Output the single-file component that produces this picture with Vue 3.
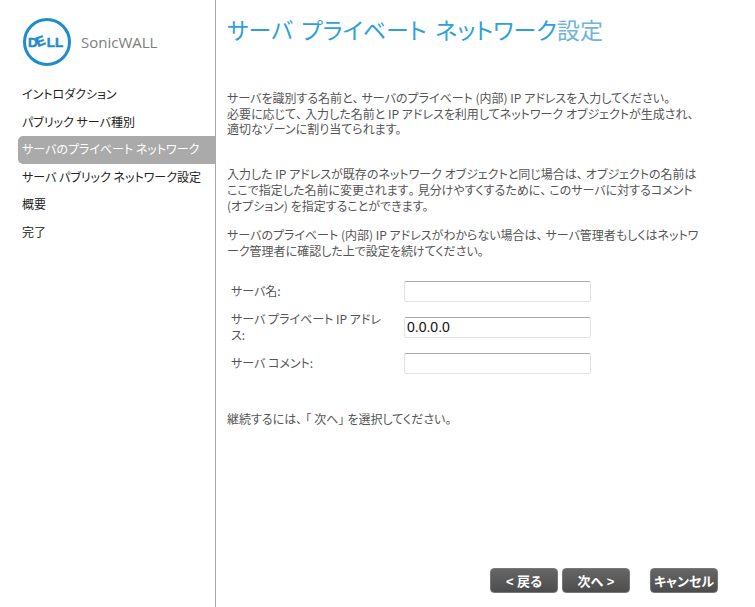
<template>
  <div class="page">
    <aside class="side">
      <div class="logo">
        <svg width="50" height="50" viewBox="0 0 50 50" class="mark">
          <circle cx="25" cy="25" r="22.5" fill="none" stroke="#1f8ccb" stroke-width="3" />
          <text x="6" y="30" rotate="0 -20 0 0" class="dell">DELL</text>
        </svg>
        <span class="brand">SonicWALL</span>
      </div>
      <nav class="nav">
        <div v-for="(item, i) in items" :key="item" class="item" :class="{ active: i === 2 }">{{ item }}</div>
      </nav>
    </aside>
    <main class="main">
      <h1 class="title">サーバ プライベート ネットワーク<span class="light">設定</span></h1>
      <p class="p p1">サーバを識別する名前と<span class="fw">、</span>サーバのプライベート (内部) IP アドレスを入力してください。<br>必要に応じて<span class="fw">、</span>入力した名前と IP アドレスを利用してネットワーク オブジェクトが生成され、<br>適切なゾーンに割り当てられます。</p>
      <p class="p p2">入力した IP アドレスが既存のネットワーク オブジェクトと同じ場合は<span class="fw">、</span>オブジェクトの名前は<br>ここで指定した名前に変更されます<span class="fw">。</span>見分けやすくするために<span class="fw">、</span>このサーバに対するコメント<br>(オプション) を指定することができます。</p>
      <p class="p p3">サーバのプライベート (内部) IP アドレスがわからない場合は<span class="fw">、</span>サーバ管理者もしくはネットワ<br>ーク管理者に確認した上で設定を続けてください。</p>
      <div class="form">
        <label class="lab">サーバ名:</label>
        <input class="inp" type="text" value="" />
        <label class="lab">サーバ プライベート IP アドレ<br>ス:</label>
        <input class="inp" type="text" value="0.0.0.0" />
        <label class="lab">サーバ コメント:</label>
        <input class="inp" type="text" value="" />
      </div>
      <p class="p p4">継続するには<span class="fw">、「</span>次へ<span class="fw">」</span>を選択してください。</p>
      <div class="btns">
        <button class="btn">&lt; 戻る</button>
        <button class="btn">次へ &gt;</button>
        <button class="btn cancel">キャンセル</button>
      </div>
    </main>
  </div>
</template>

<script setup>
const items = [
  'イントロダクション',
  'パブリック サーバ種別',
  'サーバのプライベート ネットワーク',
  'サーバ パブリック ネットワーク設定',
  '概要',
  '完了',
]
</script>

<style>
html, body { margin: 0; background: #fff; }
</style>

<style scoped>
.page {
  display: flex;
  width: 755px;
  height: 607px;
  overflow: hidden;
  font-family: "Noto Sans CJK JP", "Liberation Sans", sans-serif;
  font-size: 12px;
  font-feature-settings: "palt";
  color: #555;
}
.side {
  box-sizing: border-box;
  width: 216px;
  flex: none;
  border-right: 1px solid #aaa;
  padding: 17px 0 0 18px;
}
.logo { display: flex; align-items: center; padding-left: 4px; height: 50px; }
.mark { flex: none; }
.dell { font: 900 13.5px "Liberation Sans", sans-serif; fill: #1f8ccb; stroke: #1f8ccb; stroke-width: 0.5; }
.brand { margin-left: 9px; margin-top: -1px; font: 15px "Open Sans", sans-serif; color: #7d7d7d; }
.nav { margin-top: 14px; display: flex; flex-direction: column; }
.item {
  height: 27.6px;
  line-height: 26px;
  padding-left: 4px;
  color: #222;
  white-space: nowrap;
}
.item.active { background: #aaa; color: #fff; border-radius: 5px 0 0 5px; }
.main { position: relative; flex: 1; padding: 14px 0 0 11px; min-width: 0; }
.title { margin: 0; font-size: 23px; font-weight: 400; line-height: 30px; word-spacing: 3.5px; color: #2f9fdc; white-space: nowrap; }
.light { color: #6fb4da; }
.p { margin: 0; line-height: 15.7px; white-space: nowrap; }
.fw { letter-spacing: 3px; }
.p1 { margin-top: 46px; }
.p2 { margin-top: 29px; }
.p3 { margin-top: 14px; }
.p4 { margin-top: 37px; }
.form {
  display: grid;
  grid-template-columns: 173px 187px;
  grid-auto-rows: 21px;
  row-gap: 15px;
  margin-top: 22px;
  padding-left: 4px;
  align-items: center;
}
.lab { width: 165px; line-height: 16px; white-space: nowrap; }
.inp {
  box-sizing: border-box;
  width: 187px;
  height: 21px;
  padding: 0 2px;
  border: 1px solid #dfe3e8;
  border-top-color: #aaa;
  border-radius: 2px;
  background: #fff;
  font: 14px "Liberation Sans", sans-serif;
  color: #111;
  outline: none;
}
.btns {
  position: absolute;
  left: 274px;
  top: 568px;
  display: flex;
  gap: 4px;
}
.btn {
  box-sizing: border-box;
  width: 68px;
  height: 25px;
  padding: 0;
  border: 1px solid #777;
  border-radius: 4px;
  background: linear-gradient(#666, #4c4c4c);
  color: #fff;
  font: 700 13px "Liberation Sans", "Noto Sans CJK JP", sans-serif;
  font-feature-settings: "palt";
}
.cancel { margin-left: 16px; }
</style>
